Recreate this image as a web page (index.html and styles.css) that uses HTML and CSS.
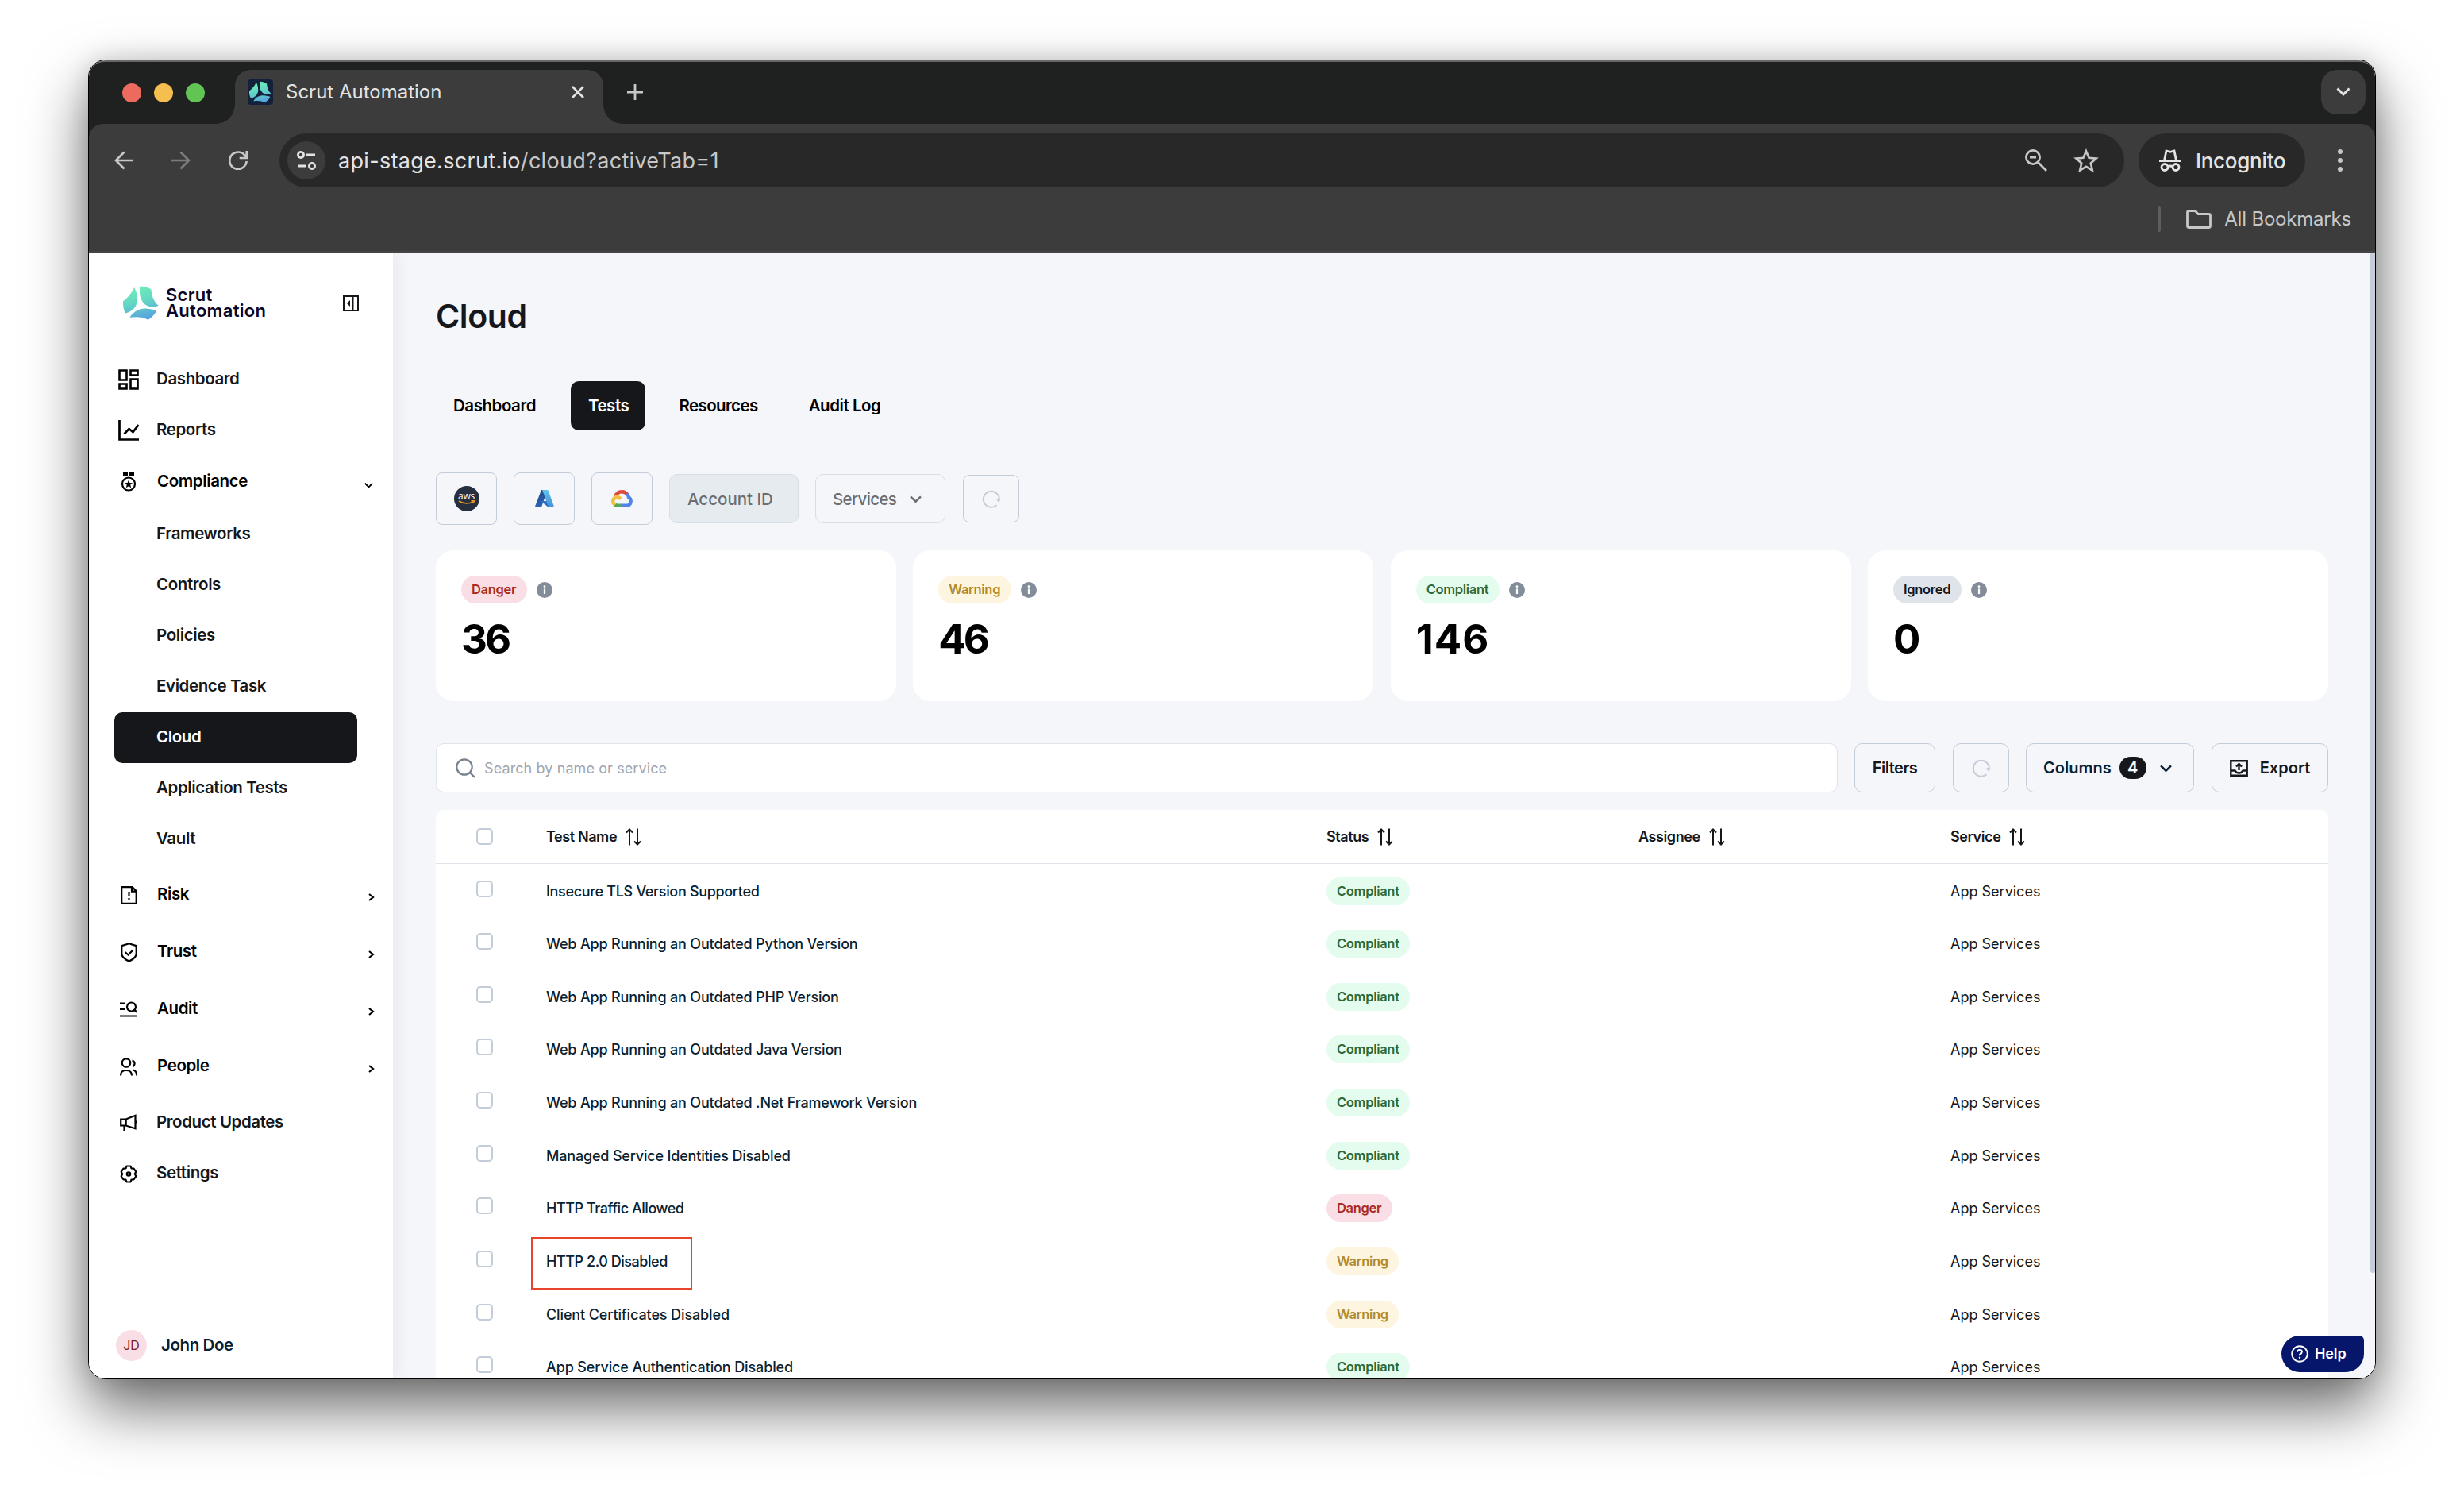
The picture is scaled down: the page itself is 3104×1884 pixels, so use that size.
FILE: index.html
```html
<!DOCTYPE html>
<html lang="en">
<head>
<meta charset="utf-8">
<title>Scrut Automation</title>
<link rel="stylesheet" href="styles.css">
</head>
<body>
<svg class="defs" aria-hidden="true">
  <defs>
    <linearGradient id="mark-fill" gradientUnits="userSpaceOnUse" x1="18" y1="0" x2="28" y2="43">
      <stop offset="0" stop-color="#6df0b6"/><stop offset=".45" stop-color="#64d6c4"/><stop offset="1" stop-color="#569fe0"/>
    </linearGradient>
    <linearGradient id="azure-dark" x1="0" y1="0" x2="0" y2="1"><stop offset="0" stop-color="#234a85"/><stop offset="1" stop-color="#2a66bd"/></linearGradient>
    <linearGradient id="azure-light" x1="0" y1="0" x2="0" y2="1"><stop offset="0" stop-color="#62c3ee"/><stop offset="1" stop-color="#4490d8"/></linearGradient>
    <symbol id="mark" viewBox="0 0 45 43">
      <path fill="url(#mark-fill)" d="M14 2C11 9 6 15 0 19.500C-.4 25 .8 30 3 34.500C12 32 18 26 18 17C18 11 16.500 6 14 2ZM21.400.400C26 .2 31 1.500 35.500 4.500C36 13 39 20 44.800 25C36 28 28 26 24 19C20.500 13 20.600 6 21.400.400ZM8.400 39.800C14 31 22 28 29 28.500C34 29 39 30 42.400 31C40 36 36 40 31.500 42.700C25 39 17 38.500 8.400 39.800Z"/>
    </symbol>
    <symbol id="chev-down" viewBox="0 0 14 10"><path d="M1 2l6 6 6-6" fill="none" stroke="currentColor" stroke-width="2.400"/></symbol>
    <symbol id="chev-right" viewBox="0 0 8 10"><path d="M1 1l5 4-5 4" fill="none" stroke="currentColor" stroke-width="2.200"/></symbol>
    <symbol id="sort" viewBox="0 0 22 22"><path d="M6 21.500V2M2 5.500L6 1.500L10 5.500M16 .5V20M12 16.500L16 20.500L20 16.500" fill="none" stroke="currentColor" stroke-width="2"/></symbol>
    <symbol id="refresh" viewBox="0 0 24 24"><path d="M18.500 20.200A10 10 0 1 1 21.800 13" fill="none" stroke="currentColor" stroke-width="2"/><path d="M18 12.500L23.500 11.500L21.500 17.500Z" fill="currentColor"/></symbol>
    <symbol id="info" viewBox="0 0 20 20"><circle cx="10" cy="10" r="10" fill="#838d99"/><path d="M10 8.500V15" fill="none" stroke="#fff" stroke-width="2.200"/><circle cx="10" cy="5.700" r="1.400" fill="#fff"/></symbol>
  </defs>
</svg>

<div class="window">
  <header class="chrome">
    <div class="tabstrip">
      <div class="lights"><i class="light red"></i><i class="light yellow"></i><i class="light green"></i></div>
      <div class="browser-tab">
        <span class="favicon"><svg width="28" height="28"><use href="#mark"/></svg></span>
        <span class="tab-title">Scrut Automation</span>
        <svg class="tab-close" width="16" height="16" viewBox="0 0 16 16"><path d="M1 1l14 14M15 1L1 15" stroke="#e3e3e3" stroke-width="2.600"/></svg>
      </div>
      <svg class="new-tab" width="20" height="20" viewBox="0 0 20 20"><path d="M10 0v20M0 10h20" stroke="#c7c7c7" stroke-width="2.800"/></svg>
      <button class="tab-menu"><svg width="18" height="12" viewBox="0 0 18 12"><path d="M1.500 1.500L9 9l7.500-7.500" fill="none" stroke="#e3e3e3" stroke-width="3"/></svg></button>
    </div>
    <div class="toolbar">
      <svg class="nav-icon" width="24" height="24" viewBox="0 0 24 24"><path d="M24 12H2M12.500 1.500L2 12l10.500 10.500" fill="none" stroke="#c7c7c7" stroke-width="2.700"/></svg>
      <svg class="nav-icon" width="24" height="24" viewBox="0 0 24 24"><path d="M0 12h22M11.500 1.500L22 12 11.500 22.500" fill="none" stroke="#7c7c7c" stroke-width="2.700"/></svg>
      <svg class="nav-icon" width="24" height="24" viewBox="0 0 24 24"><path d="M22.600 13A10.700 10.700 0 1 1 20 5.200l2.500 3M22.700 0v9h-9" fill="none" stroke="#c7c7c7" stroke-width="2.700"/></svg>
      <div class="omnibox">
        <span class="site-info"><svg width="26" height="24" viewBox="0 0 26 24"><g fill="none" stroke="#e3e3e3" stroke-width="2.800"><circle cx="6" cy="5" r="3.600"/><path d="M13 5h11M2 19h11"/><circle cx="20" cy="19" r="3.600"/></g></svg></span>
        <span class="url"><b>api-stage.scrut.io</b>/cloud?activeTab=1</span>
        <svg class="zoom-icon" width="30" height="30" viewBox="0 0 30 30"><g fill="none" stroke="#c7c7c7" stroke-width="2.800"><circle cx="11" cy="11" r="8.600"/><path d="M17.500 17.500L28 28M7 11h8"/></g></svg>
        <svg class="star-icon" width="32" height="31" viewBox="0 0 32 31"><path d="M16 3.500l3.600 8.300 9 .8-6.800 6 2 8.900L16 22.800l-7.800 4.700 2-8.900-6.800-6 9-.8z" fill="none" stroke="#c7c7c7" stroke-width="2.700"/></svg>
      </div>
      <div class="incognito">
        <svg width="30" height="28" viewBox="0 0 30 28"><g fill="none" stroke="#e3e3e3" stroke-width="2.800"><path d="M1 14.500h28M7.500 14l2.500-12 5 1.300 5-1.300 2.500 12"/><circle cx="8" cy="22.500" r="4"/><circle cx="22" cy="22.500" r="4"/><path d="M12 22q3-2 6 0"/></g></svg>
        <span>Incognito</span>
      </div>
      <svg class="kebab" width="6" height="28" viewBox="0 0 6 28"><g fill="#c7c7c7"><circle cx="3" cy="3" r="3"/><circle cx="3" cy="14" r="3"/><circle cx="3" cy="25" r="3"/></g></svg>
    </div>
    <div class="bookmarks">
      <i class="divider"></i>
      <svg width="32" height="24" viewBox="0 0 32 24"><path d="M1.500 3.500q0-2 2-2h8l3.500 4h13.500q2 0 2 2v13q0 2-2 2h-25q-2 0-2-2z" fill="none" stroke="#c7c7c7" stroke-width="2.800"/></svg>
      <span>All Bookmarks</span>
    </div>
  </header>

  <div class="app">
    <aside class="sidebar">
      <div class="brand">
        <svg width="45" height="43"><use href="#mark"/></svg>
        <div class="brand-name"><span>Scrut</span><span>Automation</span></div>
        <svg class="collapse" width="20" height="20" viewBox="0 0 20 20"><path d="M1 1h18v18H1zM12.500 1v18" fill="none" stroke="#16171b" stroke-width="2"/><path d="M9 6v8l-4-4z" fill="#16171b"/></svg>
      </div>
      <nav class="nav">
        <a class="item"><span class="ico"><svg width="26" height="26" viewBox="0 0 26 26"><path d="M1.500 1.500h9v12h-9zM15.500 1.500h9v6h-9zM15.500 12.500h9v12h-9zM1.500 18.500h9v6h-9z" fill="none" stroke="#000" stroke-width="2.600"/></svg></span><span class="label">Dashboard</span></a>
        <a class="item"><span class="ico"><svg width="26" height="26" viewBox="0 0 26 26"><path d="M1.500 0v24.500H26M7.500 17.500l6-6.500 5 4L25.500 6" fill="none" stroke="#000" stroke-width="2.700"/></svg></span><span class="label">Reports</span></a>
        <a class="item group first"><span class="ico"><svg width="20" height="24" viewBox="0 0 20 24"><path d="M3 0h6v4H3zM11 0h6v4h-6z"/><circle cx="10" cy="14.500" r="8" fill="none" stroke="#000" stroke-width="2.200"/><path d="M10 9.500l1.400 3.400 3.600.3-2.700 2.400.8 3.600-3.100-1.900-3.100 1.900.8-3.600L5 13.200l3.600-.3z"/></svg></span><span class="label">Compliance</span><svg class="chev" width="11" height="8"><use href="#chev-down"/></svg></a>
        <div class="submenu">
          <a class="item"><span class="label">Frameworks</span></a>
          <a class="item"><span class="label">Controls</span></a>
          <a class="item"><span class="label">Policies</span></a>
          <a class="item"><span class="label">Evidence Task</span></a>
          <a class="item active"><span class="label">Cloud</span></a>
          <a class="item"><span class="label">Application Tests</span></a>
          <a class="item"><span class="label">Vault</span></a>
        </div>
        <a class="item group"><span class="ico"><svg width="21" height="23" viewBox="0 0 21 23"><path d="M1.200 1.200h13.500l5 5v15.600H1.200zM14 1.200v5.500h5.700" fill="none" stroke="#000" stroke-width="2.200"/><path d="M10.500 7v6M10.500 15v2.500" stroke="#000" stroke-width="2.200"/></svg></span><span class="label">Risk</span><svg class="chev" width="8" height="10"><use href="#chev-right"/></svg></a>
        <a class="item group"><span class="ico"><svg width="21" height="25" viewBox="0 0 21 25"><path d="M10.500 1.300l9.200 2.800v11q-1.500 5-9.200 8.500Q2.800 20 1.300 15.100v-11z" fill="none" stroke="#000" stroke-width="2.200"/><path d="M5.500 12l4 3.500 6-6" fill="none" stroke="#000" stroke-width="2.200"/></svg></span><span class="label">Trust</span><svg class="chev" width="8" height="10"><use href="#chev-right"/></svg></a>
        <a class="item group"><span class="ico"><svg width="22" height="20" viewBox="0 0 22 20"><path d="M0 2.500h6M0 10h6M0 18.500h21M17.500 10.500l4 3" fill="none" stroke="#000" stroke-width="2.200"/><circle cx="14.500" cy="7" r="5.500" fill="none" stroke="#000" stroke-width="2.200"/></svg></span><span class="label">Audit</span><svg class="chev" width="8" height="10"><use href="#chev-right"/></svg></a>
        <a class="item group"><span class="ico"><svg width="22" height="23" viewBox="0 0 22 23"><g fill="none" stroke="#000" stroke-width="2.200"><circle cx="8" cy="6.500" r="5.200"/><path d="M1 22.500c0-4.500 3-6.500 7-6.500s7 2 7 6.500M15.500 3.500c4 1 4 6 .5 8M17 15.500c3 1 4.200 3.500 4.200 7"/></g></svg></span><span class="label">People</span><svg class="chev" width="8" height="10"><use href="#chev-right"/></svg></a>
        <a class="item after"><span class="ico"><svg width="22" height="22" viewBox="0 0 22 22"><path d="M1.200 6.500h6.500L19.500 1.800v16.400L7.700 14.500H1.200zM7.700 6.500v8M5.500 15v6M20.800 8.500v3" fill="none" stroke="#000" stroke-width="2.200"/></svg></span><span class="label">Product Updates</span></a>
        <a class="item"><span class="ico"><svg width="22" height="23" viewBox="0 0 22 23"><path d="M8.500 1.500h5l1 3 3 .2 2.800 4-1.500 2.800 1.500 2.800-2.800 4-3 .2-1 3h-5l-1-3-3-.2-2.800-4 1.500-2.800-1.500-2.800 2.800-4 3-.2z" fill="none" stroke="#000" stroke-width="2.200" stroke-linejoin="round"/><circle cx="11" cy="11.500" r="2.200" fill="none" stroke="#000" stroke-width="2.200"/></svg></span><span class="label">Settings</span></a>
      </nav>
      <div class="user"><span class="avatar">JD</span><span class="user-name">John Doe</span></div>
    </aside>

    <main class="main">
      <h1 class="title">Cloud</h1>
      <div class="tabs"><a class="tab">Dashboard</a><a class="tab on">Tests</a><a class="tab resources">Resources</a><a class="tab">Audit Log</a></div>

      <div class="filters">
        <button class="cloud-btn"><span class="aws"><span class="aws-word">aws</span><svg width="22" height="6" viewBox="0 0 22 6"><path d="M1 1q9 5.500 18 1M16.500.8h4l-1.300 3.200" fill="none" stroke="#f0981f" stroke-width="1.500"/></svg></span></button>
        <button class="cloud-btn"><svg width="24" height="23" viewBox="0 0 24 23"><path d="M8 0h7.500L8 22H1.500Q-.3 22 .3 20z" fill="url(#azure-dark)"/><path d="M7 14h10v8z" fill="#2f6ccd"/><path d="M9 0h6.500q1 0 1.400 1.200L23.600 20q.4 2-1.300 2H16q1-.6.500-2z" fill="url(#azure-light)"/></svg></button>
        <button class="cloud-btn"><svg width="27" height="22" viewBox="0 0 27 22"><g fill="none" stroke-width="4.400"><path d="M5 9Q7 2.300 13.500 2.300Q18 2.300 20.500 6" stroke="#dc4b3c"/><path d="M19.800 5Q22 8 22 9.300Q24.800 11 24.700 14.500Q24 19.800 19.500 19.800H13.500" stroke="#5185ec"/><path d="M14 19.800H8Q6 19.800 4.500 18.500" stroke="#58a55c"/><path d="M4.800 19Q1.500 16.500 2.300 13Q4 8.800 8 9Q10 9.300 12 11.500" stroke="#f2bf42"/></g></svg></button>
        <button class="select account">Account ID</button>
        <button class="select services">Services <svg width="15" height="11"><use href="#chev-down"/></svg></button>
        <button class="refresh"><svg width="24" height="24"><use href="#refresh"/></svg></button>
      </div>

      <section class="cards">
        <article class="card"><div class="card-head"><span class="pill danger">Danger</span><svg width="20" height="20"><use href="#info"/></svg></div><div class="num">36</div></article>
        <article class="card"><div class="card-head"><span class="pill warning">Warning</span><svg width="20" height="20"><use href="#info"/></svg></div><div class="num">46</div></article>
        <article class="card"><div class="card-head"><span class="pill compliant">Compliant</span><svg width="20" height="20"><use href="#info"/></svg></div><div class="num wide">146</div></article>
        <article class="card"><div class="card-head"><span class="pill ignored">Ignored</span><svg width="20" height="20"><use href="#info"/></svg></div><div class="num">0</div></article>
      </section>

      <div class="actions">
        <label class="search"><svg width="25" height="25" viewBox="0 0 25 25"><circle cx="11" cy="11" r="9.700" fill="none" stroke="#76818e" stroke-width="2.200"/><path d="M18 18l6 6" stroke="#76818e" stroke-width="2.400"/></svg><span>Search by name or service</span></label>
        <button class="btn filters-btn">Filters</button>
        <button class="btn refresh-btn"><svg width="24" height="24"><use href="#refresh"/></svg></button>
        <button class="btn columns-btn">Columns<span class="count">4</span><svg width="15" height="11"><use href="#chev-down"/></svg></button>
        <button class="btn export-btn"><svg width="23" height="21" viewBox="0 0 23 21"><path d="M1.300 1.300h20.400v18.400H1.300zM1.500 13.500h5q1.500 3 5 3t5-3h5M11.500 13V6M8 8.500L11.500 5 15 8.500" fill="none" stroke="#16171b" stroke-width="2.400"/></svg>Export</button>
      </div>

      <section class="table">
        <div class="row head"><i class="check"></i><span>Test Name <svg width="22" height="22"><use href="#sort"/></svg></span><span>Status <svg width="22" height="22"><use href="#sort"/></svg></span><span>Assignee <svg width="22" height="22"><use href="#sort"/></svg></span><span>Service <svg width="22" height="22"><use href="#sort"/></svg></span></div>
        <div class="row"><i class="check"></i><span class="name caps">Insecure TLS Version Supported</span><span><b class="pill compliant">Compliant</b></span><span></span><span class="svc">App Services</span></div>
        <div class="row"><i class="check"></i><span class="name">Web App Running an Outdated Python Version</span><span><b class="pill compliant">Compliant</b></span><span></span><span class="svc">App Services</span></div>
        <div class="row"><i class="check"></i><span class="name">Web App Running an Outdated PHP Version</span><span><b class="pill compliant">Compliant</b></span><span></span><span class="svc">App Services</span></div>
        <div class="row"><i class="check"></i><span class="name">Web App Running an Outdated Java Version</span><span><b class="pill compliant">Compliant</b></span><span></span><span class="svc">App Services</span></div>
        <div class="row"><i class="check"></i><span class="name">Web App Running an Outdated .Net Framework Version</span><span><b class="pill compliant">Compliant</b></span><span></span><span class="svc">App Services</span></div>
        <div class="row"><i class="check"></i><span class="name">Managed Service Identities Disabled</span><span><b class="pill compliant">Compliant</b></span><span></span><span class="svc">App Services</span></div>
        <div class="row"><i class="check"></i><span class="name tight">HTTP Traffic Allowed</span><span><b class="pill danger">Danger</b></span><span></span><span class="svc">App Services</span></div>
        <div class="row"><i class="check"></i><span class="name tight marked">HTTP 2.0 Disabled</span><span><b class="pill warning">Warning</b></span><span></span><span class="svc">App Services</span></div>
        <div class="row"><i class="check"></i><span class="name long">Client Certificates Disabled</span><span><b class="pill warning">Warning</b></span><span></span><span class="svc">App Services</span></div>
        <div class="row"><i class="check"></i><span class="name long">App Service Authentication Disabled</span><span><b class="pill compliant">Compliant</b></span><span></span><span class="svc">App Services</span></div>
      </section>
    </main>
    <i class="scrollbar"></i>
    <button class="help"><svg width="22" height="22" viewBox="0 0 22 22"><circle cx="11" cy="11" r="9.800" fill="none" stroke="#fff" stroke-width="1.900"/><path d="M8 8.800q0-2.800 3-2.800t3 2.600q0 1.600-3 3.200v1.400" fill="none" stroke="#fff" stroke-width="1.900"/><circle cx="11" cy="15.700" r="1.200" fill="#fff"/></svg>Help</button>
  </div>
</div>
</body>
</html>
```
FILE: styles.css
```css
*, *::before, *::after { box-sizing: border-box; }
html, body { margin: 0; }
body {
  width: 3104px;
  height: 1884px;
  padding: 75px 111px;
  background: #fff;
  overflow: hidden;
  font-family: Inter, sans-serif;
  color: #16171b;
}
svg { flex: none; display: block; }
button { font: inherit; color: inherit; background: none; border: 0; padding: 0; margin: 0; }
.defs { position: absolute; width: 0; height: 0; }

.window {
  width: 2882px;
  height: 1662px;
  border: 1px solid #000;
  border-radius: 22px;
  overflow: hidden;
  background: #fff;
  display: flex;
  flex-direction: column;
  box-shadow: 0 36px 76px rgba(0, 0, 0, .58), 0 0 30px rgba(0, 0, 0, .14);
}

/* Browser chrome */
.chrome {
  height: 242px;
  flex: none;
  background: #1f2120;
  border-radius: 20px 20px 0 0;
  border-top: 2px solid #676867;
}
.tabstrip { height: 78px; display: flex; align-items: flex-start; padding: 10px 12px 0 42px; }
.lights { display: flex; gap: 16px; padding-top: 17px; }
.light { width: 24px; height: 24px; border-radius: 50%; }
.red { background: #ed6a5e; }
.yellow { background: #f4bf4f; }
.green { background: #61c554; }
.browser-tab {
  position: relative;
  width: 464px;
  height: 68px;
  margin-left: 38px;
  padding: 0 24px 12px 16px;
  background: #3c3c3c;
  border-radius: 20px 20px 0 0;
  display: flex;
  align-items: center;
}
.browser-tab::before, .browser-tab::after {
  content: "";
  position: absolute;
  bottom: 0;
  width: 24px;
  height: 24px;
}
.browser-tab::before { left: -24px; background: radial-gradient(circle at 0 0, transparent 23.5px, #3c3c3c 24px); }
.browser-tab::after { right: -24px; background: radial-gradient(circle at 100% 0, transparent 23.5px, #3c3c3c 24px); }
.favicon { width: 32px; height: 32px; border-radius: 4px; background: #14213a; display: grid; place-items: center; }
.tab-title { margin-left: 16px; font-size: 24px; color: #e3e3e3; line-height: 30px; }
.tab-close { margin-left: auto; }
.new-tab { margin: 18px 0 0 30px; }
.tab-menu { margin-left: auto; width: 56px; height: 56px; border-radius: 20px; background: #3c3c3c; display: grid; place-items: center; }
.toolbar {
  height: 92px;
  background: #3c3c3c;
  border-radius: 18px 18px 0 0;
  display: flex;
  align-items: center;
  padding: 0 41px 0 32px;
}
.nav-icon { margin-right: 48px; }
.nav-icon + .nav-icon + .nav-icon { margin-right: 40px; }
.omnibox { width: 2324px; height: 68px; border-radius: 34px; background: #282828; display: flex; align-items: center; padding: 0 32px 0 10px; }
.site-info { width: 48px; height: 48px; border-radius: 50%; background: #3c3c3c; display: grid; place-items: center; }
.url { margin-left: 16px; font-size: 27px; letter-spacing: .31px; color: #c7c7c7; }
.url b { font-weight: 400; color: #e3e3e3; }
.zoom-icon { margin-left: auto; margin-right: 32px; }
.incognito { margin-left: 18px; width: 210px; height: 68px; border-radius: 34px; background: #282828; display: flex; align-items: center; gap: 17px; padding-left: 25px; font-size: 26px; font-weight: 500; letter-spacing: -.3px; color: #e3e3e3; }
.kebab { margin-left: auto; }
.bookmarks { height: 70px; background: #3c3c3c; border-bottom: 2px solid #454545; display: flex; align-items: flex-start; justify-content: flex-end; padding: 12px 30px 0 0; line-height: 32px; font-size: 24px; letter-spacing: -.2px; color: #c7c7c7; }
.bookmarks svg { margin: 4px 16px 0 32px; }
.divider { width: 4px; height: 32px; border-radius: 2px; background: #5e5e5e; }

/* Application */
.app { position: relative; flex: 1; min-height: 0; display: flex; background: #f5f6fa; }
.sidebar { width: 384px; flex: none; background: #fff; display: flex; flex-direction: column; border-right: 1px solid #eceef1; box-shadow: 4px 0 20px rgba(20, 40, 60, .06); clip-path: inset(0 -40px 0 0); }
.brand { display: flex; align-items: center; height: 47px; margin-top: 40px; padding: 0 43px 0 43px; }
.brand-name { margin-left: 9px; font-size: 22px; line-height: 19.500px; font-weight: 600; letter-spacing: .3px; color: #0a0626; }
.brand-name span { display: block; }
.collapse { margin-left: auto; }
.nav { padding: 41px 0 0 32px; }
.item { display: flex; align-items: center; height: 64px; font-size: 20.500px; font-weight: 600; letter-spacing: -.4px; color: #16171b; }
.ico { width: 36px; display: grid; place-items: center; margin-right: 17px; }
.label { padding-bottom: 3px; }
.group { height: 72px; color: #000; }
.group .label { margin-left: 1px; }
.group .chev { margin: 5px 23px 0 auto; }
.first { height: 65px; }
.group.first .chev { margin: 9px 25px 0 auto; }
.submenu { padding-top: 2px; }
.submenu .item { width: 306px; padding-left: 53px; border-radius: 10px; }
.submenu + .group { margin-top: 2px; }
.submenu .active { background: #16171b; color: #fff; }
.after { margin-top: 3px; }
.user { margin-top: auto; height: 40px; margin-bottom: 22px; display: flex; align-items: center; padding-left: 34px; }
.avatar { width: 39px; height: 39px; border-radius: 50%; background: #f9dfe5; color: #7a1c33; font-size: 16px; display: grid; place-items: center; }
.user-name { margin-left: 18px; padding-bottom: 2px; font-size: 20.500px; font-weight: 600; letter-spacing: -.4px; color: #0a1f33; }

.main { width: 2437px; padding: 56px 0 0 53px; height: 1418px; }
.title { margin: 0; height: 48px; line-height: 48px; font-size: 41px; font-weight: 600; letter-spacing: -.4px; }
.tabs { display: flex; gap: 22px; margin-top: 58px; height: 62px; }
.tab { padding: 0 22px; line-height: 61px; border-radius: 10px; font-size: 20.500px; font-weight: 600; letter-spacing: -.46px; color: #000; }
.tab.on { background: #16171b; color: #fff; width: 94px; }
.tab.resources { padding: 0 20px 0 20.500px; letter-spacing: -.6px; }
.filters { display: flex; align-items: center; margin-top: 53px; height: 66px; font-size: 20.500px; font-weight: 500; letter-spacing: -.3px; color: #6a6e73; }
.cloud-btn { width: 77px; height: 66px; margin-right: 21px; border: 1px solid #c3ccd9; border-radius: 8px; display: grid; place-items: center; }
.aws { width: 32px; height: 32px; border-radius: 50%; background: #252f3e; display: flex; flex-direction: column; align-items: center; justify-content: center; }
.aws-word { color: #fff; font: 500 12px/9px "Open Sans", sans-serif; letter-spacing: -.3px; padding-bottom: 1px; }
.select { width: 164px; height: 62px; margin-right: 22px; padding-left: 22px; border: 1px solid #d6dee7; border-radius: 10px; display: flex; align-items: center; gap: 18px; }
.services { padding-left: 21px; letter-spacing: -.65px; gap: 17px; }
.account { width: 163px; margin-right: 21px; background: #e6ebef; }
.refresh { width: 71px; height: 60px; border: 1px solid #c3ccd9; border-radius: 8px; display: grid; place-items: center; color: #c3ccd9; }

.cards { display: grid; grid-template-columns: repeat(4, 580px); justify-content: space-between; width: 2384px; margin-top: 32px; }
.card { height: 190px; background: #fff; border-radius: 22px; padding: 32px 32px 0; }
.card-head { display: flex; align-items: center; gap: 12px; }
.pill { display: inline-block; height: 35px; line-height: 35px; border-radius: 18px; padding: 0 13.500px 0 13px; font-size: 16.500px; font-weight: 600; letter-spacing: -.3px; }
.danger { background: #f9dfe5; color: #a92a22; }
.warning { background: #fdf5df; color: #b08a2c; }
.compliant { background: #e3fcee; color: #2c6a3c; }
.ignored { background: #dfe3ea; color: #16171b; }
.num { margin-top: 19px; font-size: 51px; line-height: 52px; font-weight: 700; letter-spacing: -3px; color: #000; }
.num.wide { letter-spacing: 1px; }

.actions { display: flex; width: 2384px; margin-top: 53px; height: 62px; font-size: 20px; font-weight: 600; letter-spacing: -.3px; }
.search { width: 1766px; border: 1px solid #dfe3ea; border-radius: 10px; background: #fff; display: flex; align-items: center; gap: 11px; padding-left: 24px; font-size: 18px; font-weight: 400; letter-spacing: .1px; color: #a0a6b0; }
.btn { height: 62px; border: 1px solid #c3ccd9; border-radius: 10px; display: flex; align-items: center; justify-content: center; }
.filters-btn { width: 102px; margin-left: 21px; letter-spacing: -.5px; }
.refresh-btn { width: 71px; margin-left: 22px; color: #c3ccd9; }
.columns-btn { width: 212px; margin-left: 21px; justify-content: flex-start; padding-left: 21px; color: #0a1f33; letter-spacing: 0; }
.count { width: 34px; height: 28px; border-radius: 14px; background: #16171b; color: #fff; line-height: 28px; margin: 0 17px 0 10px; text-align: center; }
.export-btn { width: 147px; margin-left: 22px; gap: 15px; }

.table { width: 2384px; margin-top: 22px; background: #fff; border-radius: 10px 10px 0 0; }
.row { display: grid; grid-template-columns: 51px 88px 983px 393px 393px 1fr; align-items: center; height: 66.670px; padding-top: 1.400px; font-size: 18px; }
.row > .check { grid-column: 2; }
.head { height: 68px; padding-top: 0; border-bottom: 1px solid #dfe3ea; font-weight: 600; letter-spacing: -.4px; color: #16171b; }
.head span { display: flex; align-items: center; gap: 10px; }
.check { width: 21px; height: 21px; border: 2px solid #c3ccd9; border-radius: 5px; background: #fff; margin-top: -6px; }
.head .check { margin-top: 0; }
.name { font-weight: 500; letter-spacing: -.18px; color: #0a1f33; }
.name.caps { letter-spacing: -.32px; }
.name.tight { letter-spacing: -.45px; }
.name.long { letter-spacing: -.12px; }
.marked { position: relative; }
.marked::after { content: ""; position: absolute; left: -19px; top: calc(50% - 31px); width: 203px; height: 66px; border: 2.500px solid #e8432c; }
.svc { letter-spacing: 0; color: #16171b; }

.scrollbar { position: absolute; right: 0; top: 0; width: 6px; height: 1285px; border-radius: 3px; background: #c5cdd9; }
.help { position: absolute; right: 14px; bottom: 8px; width: 104px; height: 46px; border-radius: 23px 6px 23px 23px; background: #06166b; color: #fff; font-size: 18px; font-weight: 600; letter-spacing: -.1px; display: flex; align-items: center; padding: 0 0 1px 12px; gap: 8px; }
```
